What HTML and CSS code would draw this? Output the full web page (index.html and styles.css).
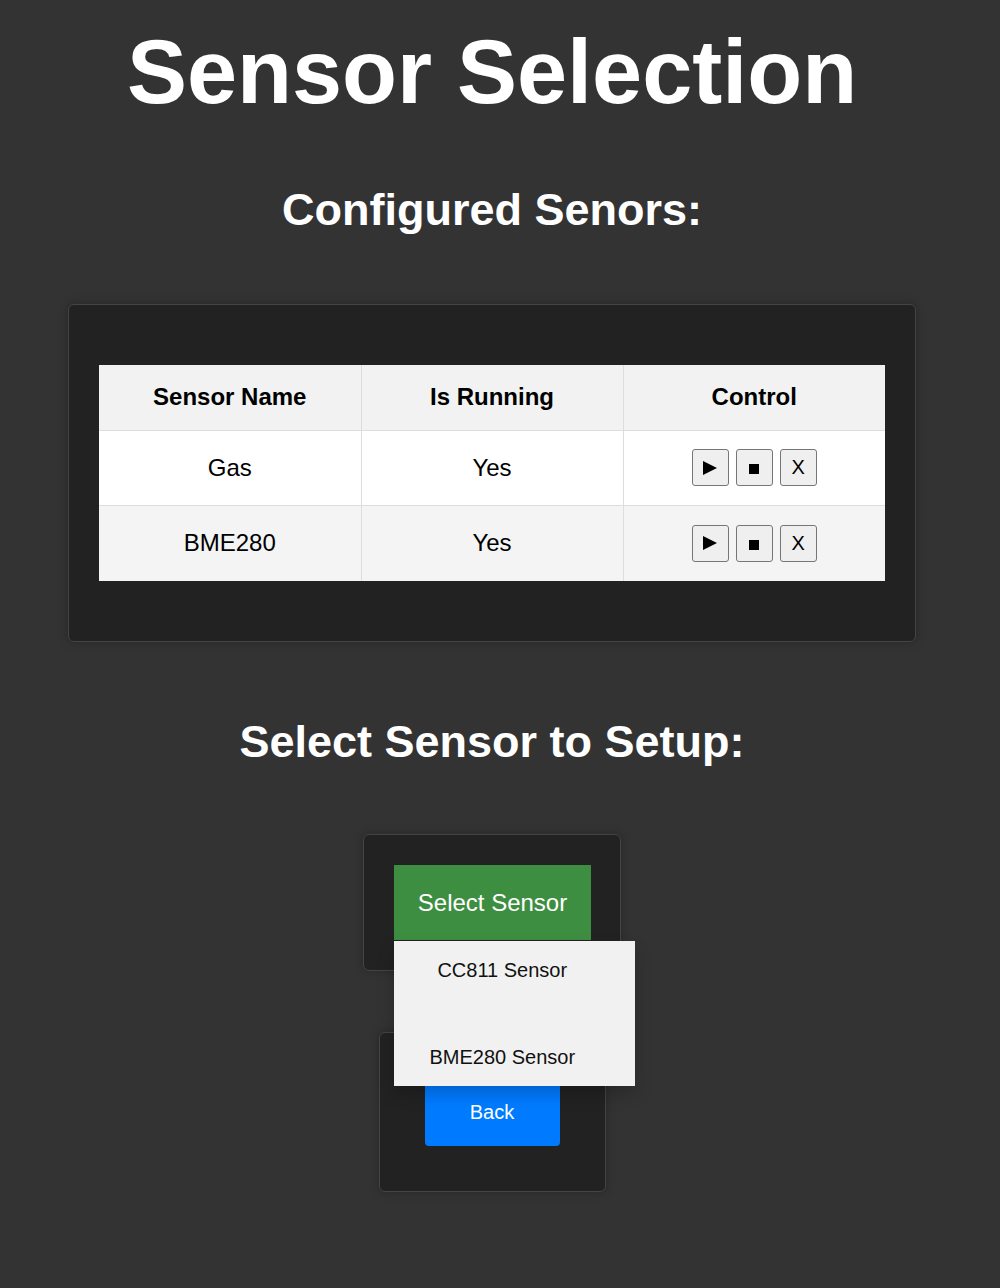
FILE: index.html
```html
<!DOCTYPE html>
<html lang="en">
<head>
<meta charset="utf-8">
<title>Sensor Selection</title>
<link rel="stylesheet" href="styles.css">
</head>
<body>
<div class="page">
  <h1 class="title">Sensor Selection</h1>
  <h2 class="subtitle subtitle-first">Configured Senors:</h2>
  <div class="card table-card">
    <table class="sensor-table">
      <thead>
        <tr class="head-row">
          <th>Sensor Name</th>
          <th>Is Running</th>
          <th>Control</th>
        </tr>
      </thead>
      <tbody>
        <tr class="row row-odd">
          <td>Gas</td>
          <td>Yes</td>
          <td>
            <div class="controls">
              <button class="ctl" type="button" aria-label="Start"><svg width="14" height="14" viewBox="0 0 14 14"><path d="M0 0 L14 7 L0 14 Z" fill="#000"/></svg></button>
              <button class="ctl" type="button" aria-label="Stop"><svg class="sq" width="10" height="10" viewBox="0 0 10 10"><rect width="10" height="10" fill="#000"/></svg></button>
              <button class="ctl ctl-x" type="button">X</button>
            </div>
          </td>
        </tr>
        <tr class="row row-even row-last">
          <td>BME280</td>
          <td>Yes</td>
          <td>
            <div class="controls">
              <button class="ctl" type="button" aria-label="Start"><svg width="14" height="14" viewBox="0 0 14 14"><path d="M0 0 L14 7 L0 14 Z" fill="#000"/></svg></button>
              <button class="ctl" type="button" aria-label="Stop"><svg class="sq" width="10" height="10" viewBox="0 0 10 10"><rect width="10" height="10" fill="#000"/></svg></button>
              <button class="ctl ctl-x" type="button">X</button>
            </div>
          </td>
        </tr>
      </tbody>
    </table>
  </div>

  <h2 class="subtitle subtitle-second">Select Sensor to Setup:</h2>

  <div class="card select-card">
    <div class="dropdown">
      <button class="drop-btn" type="button">Select Sensor</button>
      <div class="drop-menu">
        <a class="drop-item" href="#">CC811 Sensor</a>
        <div class="drop-gap"></div>
        <a class="drop-item" href="#">BME280 Sensor</a>
      </div>
    </div>
  </div>

  <div class="card back-card">
    <button class="back-btn" type="button">Back</button>
  </div>
</div>
</body>
</html>
```

FILE: styles.css
```css
html, body {
  margin: 0;
  padding: 0;
  background: #333333;
}

body {
  font-family: "Liberation Sans", Arial, sans-serif;
  color: #ffffff;
}

.page {
  width: 984px;
  display: flex;
  flex-direction: column;
  align-items: center;
  padding-bottom: 40px;
}

.title {
  margin: 20px 0 0;
  font-size: 90px;
  line-height: 104px;
  font-weight: bold;
  color: #ffffff;
}

.subtitle {
  font-size: 45px;
  line-height: 52px;
  font-weight: bold;
  color: #ffffff;
  margin: 0;
}

.subtitle-first {
  margin-top: 60px;
}

.subtitle-second {
  margin-top: 74px;
}

.card {
  background: #222222;
  border: 1px solid #444444;
  border-radius: 6px;
  box-shadow: 0 0 10px rgba(0, 0, 0, 0.25);
  box-sizing: border-box;
}

.table-card {
  width: 848px;
  margin-top: 68px;
  padding: 60px 30px;
}

.sensor-table {
  width: 100%;
  border-collapse: collapse;
  table-layout: fixed;
  color: #000000;
  font-size: 24px;
}

.sensor-table th,
.sensor-table td {
  border: 1px solid #dddddd;
  text-align: center;
  vertical-align: middle;
  padding: 0 18px;
}

.sensor-table tr:first-child th {
  border-top: none;
}

.sensor-table th:first-child,
.sensor-table td:first-child {
  border-left: none;
}

.sensor-table th:last-child,
.sensor-table td:last-child {
  border-right: none;
}

.sensor-table tbody tr:last-child td {
  border-bottom: none;
}

.head-row {
  background: #f2f2f2;
  height: 65px;
}

.head-row th {
  font-weight: bold;
}

.row {
  height: 75px;
}

.row-last {
  height: 76px;
}

.row-odd {
  background: #ffffff;
}

.row-even {
  background: #f4f4f4;
}

.controls {
  display: flex;
  justify-content: center;
  gap: 7px;
}

.ctl {
  width: 37px;
  height: 37px;
  padding: 0;
  margin: 0;
  background: #efefef;
  border: 1px solid #767676;
  border-radius: 3px;
  display: flex;
  align-items: center;
  justify-content: center;
  font-family: "Liberation Sans", Arial, sans-serif;
  font-size: 20px;
  color: #000000;
}

.ctl svg {
  display: block;
}

.ctl .sq {
  margin-top: 3px;
}

.select-card {
  margin-top: 66px;
  padding: 30px 29px 30px 30px;
}

.dropdown {
  position: relative;
}

.drop-btn {
  display: block;
  background: #3e8e41;
  color: #ffffff;
  border: none;
  margin: 0;
  padding: 24px;
  height: 75px;
  font-family: "Liberation Sans", Arial, sans-serif;
  font-size: 24px;
  line-height: 27px;
}

.drop-menu {
  position: absolute;
  top: 76px;
  left: 0;
  width: 241px;
  background: #f1f1f1;
  box-shadow: 0 8px 16px rgba(0, 0, 0, 0.2);
  z-index: 2;
}

.drop-item {
  display: block;
  height: 58px;
  line-height: 58px;
  padding-right: 24px;
  text-align: center;
  color: #111111;
  text-decoration: none;
  font-size: 20px;
}

.drop-gap {
  height: 29px;
}

.back-card {
  margin-top: 61px;
  padding: 45px;
}

.back-btn {
  display: block;
  width: 135px;
  height: 68px;
  margin: 0;
  padding: 0;
  border: none;
  border-radius: 4px;
  background: #007bff;
  color: #ffffff;
  font-family: "Liberation Sans", Arial, sans-serif;
  font-size: 20px;
}
```
